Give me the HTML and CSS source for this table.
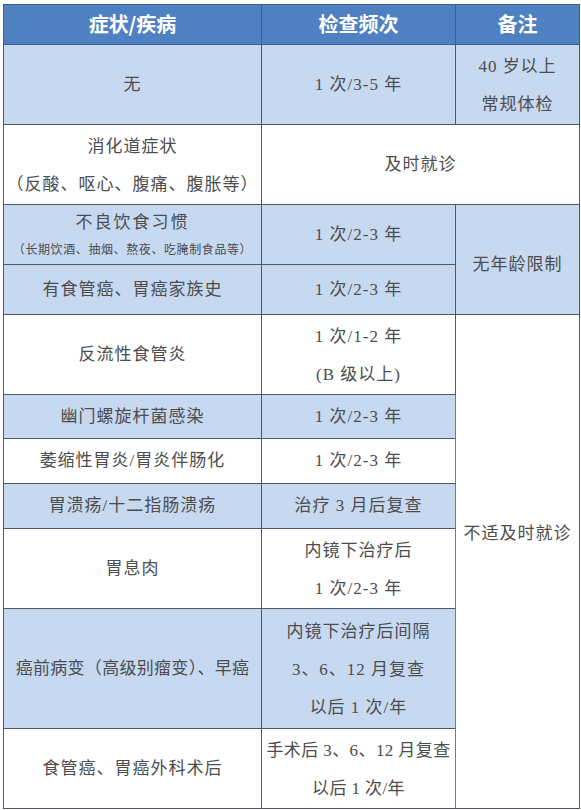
FILE: index.html
```html
<!DOCTYPE html>
<html lang="zh-CN">
<head>
<meta charset="utf-8">
<title>胃镜检查频次</title>
<link rel="stylesheet" href="styles.css">
</head>
<body>
<table class="grid">
  <colgroup>
    <col class="c1">
    <col class="c2">
    <col class="c3">
  </colgroup>
  <thead>
    <tr class="head">
      <th>症状/疾病</th>
      <th>检查频次</th>
      <th>备注</th>
    </tr>
  </thead>
  <tbody>
    <tr class="blue h80">
      <td>无</td>
      <td>1 次/3-5 年</td>
      <td class="two">40 岁以上<br>常规体检</td>
    </tr>
    <tr class="white h80">
      <td class="two">消化道症状<br>（反酸、呕心、腹痛、腹胀等）</td>
      <td colspan="2">及时就诊</td>
    </tr>
    <tr class="blue h60">
      <td class="habit"><span class="big">不良饮食习惯</span><span class="small">（长期饮酒、抽烟、熬夜、吃腌制食品等）</span></td>
      <td>1 次/2-3 年</td>
      <td rowspan="2" class="norank">无年龄限制</td>
    </tr>
    <tr class="blue h50">
      <td>有食管癌、胃癌家族史</td>
      <td>1 次/2-3 年</td>
    </tr>
    <tr class="white h80">
      <td>反流性食管炎</td>
      <td class="two">1 次/1-2 年<br>(B 级以上)</td>
      <td rowspan="7" class="visit">不适及时就诊</td>
    </tr>
    <tr class="blue h44">
      <td>幽门螺旋杆菌感染</td>
      <td>1 次/2-3 年</td>
    </tr>
    <tr class="white h45">
      <td>萎缩性胃炎/胃炎伴肠化</td>
      <td>1 次/2-3 年</td>
    </tr>
    <tr class="blue h45">
      <td>胃溃疡/十二指肠溃疡</td>
      <td>治疗 3 月后复查</td>
    </tr>
    <tr class="white h80">
      <td>胃息肉</td>
      <td class="two">内镜下治疗后<br>1 次/2-3 年</td>
    </tr>
    <tr class="blue h120">
      <td class="tight">癌前病变（高级别瘤变）、早癌</td>
      <td class="two">内镜下治疗后间隔<br>3、6、12 月复查<br>以后 1 次/年</td>
    </tr>
    <tr class="white h80">
      <td>食管癌、胃癌外科术后</td>
      <td class="two narrow">手术后 3、6、12 月复查<br>以后 1 次/年</td>
    </tr>
  </tbody>
</table>
</body>
</html>
```

FILE: styles.css
```css
html, body {
  margin: 0;
  padding: 0;
  background: #ffffff;
}

body {
  padding: 4px 0 0 3px;
}

.grid {
  border-collapse: collapse;
  table-layout: fixed;
  width: 576px;
  font-family: "Liberation Serif", "Noto Sans CJK SC", serif;
  color: #4d4d4d;
  font-size: 17px;
  border: 1px solid #6e6e6e;
}

.c1 { width: 258px; }
.c2 { width: 194px; }
.c3 { width: 124px; }

.grid th,
.grid td {
  padding: 0;
  text-align: center;
  vertical-align: middle;
  border: 1px solid #4e5866;
  white-space: nowrap;
}

.head {
  height: 40px;
  background: #4f80c2;
}

.head th {
  color: #ffffff;
  font-family: "Noto Sans CJK SC", "Liberation Sans", sans-serif;
  font-weight: 700;
  font-size: 20px;
  line-height: 24px;
  border-color: #3d5f8c;
  padding-bottom: 2px;
}

.blue { background: #c6d9f1; }
.white { background: #ffffff; }

.h44 { height: 44px; }
.h45 { height: 45px; }
.h50 { height: 50px; }
.h60 { height: 60px; }
.h80 { height: 80px; }
.h120 { height: 120px; }

.grid td {
  line-height: 40px;
  letter-spacing: 1px;
}

.grid td.two {
  line-height: 38px;
  padding-top: 2px;
}

.grid td.tight {
  letter-spacing: 0.3px;
}

.grid td.narrow {
  letter-spacing: 0.4px;
}

.habit {
  line-height: normal;
}

.habit .big {
  display: block;
  line-height: 22px;
  letter-spacing: 2px;
  padding-bottom: 8px;
}

.habit .small {
  display: block;
  font-size: 12px;
  line-height: 16px;
  letter-spacing: 0.6px;
}

.grid td.norank {
  background: #c6d9f1;
  padding-top: 10px;
}

.grid td.visit {
  background: #ffffff;
  vertical-align: top;
  padding-top: 207px;
  line-height: 24px;
  border-left-color: #7a7a7a;
}
```
